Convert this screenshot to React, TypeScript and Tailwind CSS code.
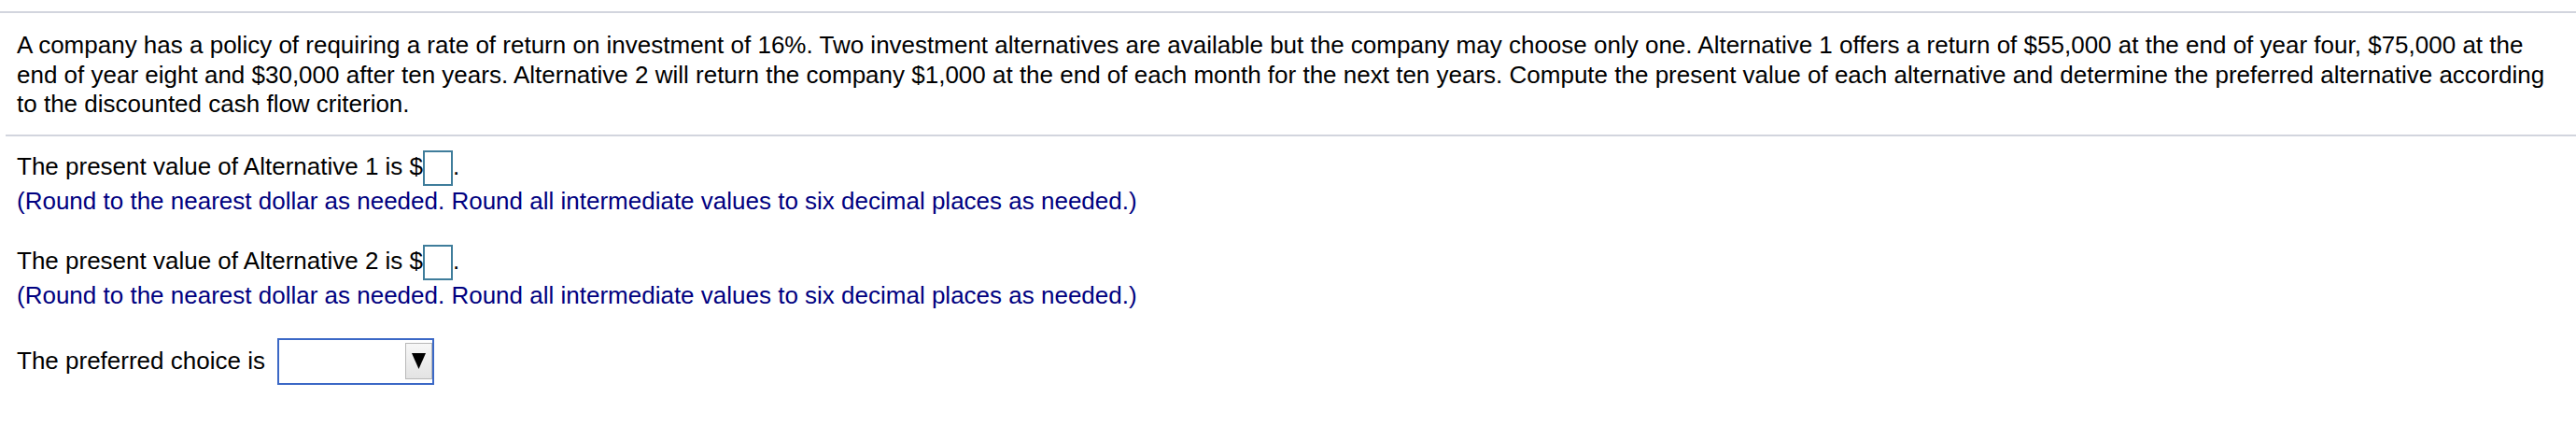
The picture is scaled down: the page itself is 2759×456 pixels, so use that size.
export default function App() {
  return (
    <div className="w-[2759px] h-[456px] bg-white text-black font-['Liberation_Sans',Arial,sans-serif] text-[26px] leading-[31.5px]">
      <div className="pt-[12px]">
        <div className="h-[2px] bg-[#d2d5de]" />
      </div>

      <p className="px-[18px] pt-[19px]">
        A company has a policy of requiring a rate of return on investment of 16%. Two investment alternatives are
        available but the company may choose only one. Alternative 1 offers a return of $55,000 at the end of year four,
        $75,000 at the end of year eight and $30,000 after ten years. Alternative 2 will return the company $1,000 at the
        end of each month for the next ten years. Compute the present value of each alternative and determine the
        preferred alternative according to the discounted cash flow criterion.
      </p>

      <div className="ml-[6px] mt-[16px] h-[2px] bg-[#d2d5de]" />

      <div className="px-[18px]">
        <div className="mt-[15px]">
          The present value of Alternative 1 is $
          <span className="inline-block w-[32px] h-[38px] border-2 border-[#3f7d9b] bg-white align-[-12px]" />.
        </div>
        <div className="mt-px text-[#000080]">
          (Round to the nearest dollar as needed. Round all intermediate values to six decimal places as needed.)
        </div>

        <div className="mt-[31px]">
          The present value of Alternative 2 is $
          <span className="inline-block w-[32px] h-[38px] border-2 border-[#3f7d9b] bg-white align-[-12px]" />.
        </div>
        <div className="mt-px text-[#000080]">
          (Round to the nearest dollar as needed. Round all intermediate values to six decimal places as needed.)
        </div>

        <div className="mt-[29px]">
          The preferred choice is{" "}
          <span className="ml-[6px] inline-block w-[168px] h-[50px] border-2 border-[#3b68c6] bg-white overflow-hidden align-[-17px]">
            <span className="flex h-full items-center justify-end">
              <span className="flex w-[29px] h-[39px] items-center justify-center border border-[#b8b8b8] bg-gradient-to-b from-[#f7f7f7] to-[#e3e3e3]">
                <svg width="15" height="17" viewBox="0 0 15 17">
                  <polygon points="0,0 15,0 7.5,17" fill="#000" />
                </svg>
              </span>
            </span>
          </span>
        </div>
      </div>
    </div>
  );
}
